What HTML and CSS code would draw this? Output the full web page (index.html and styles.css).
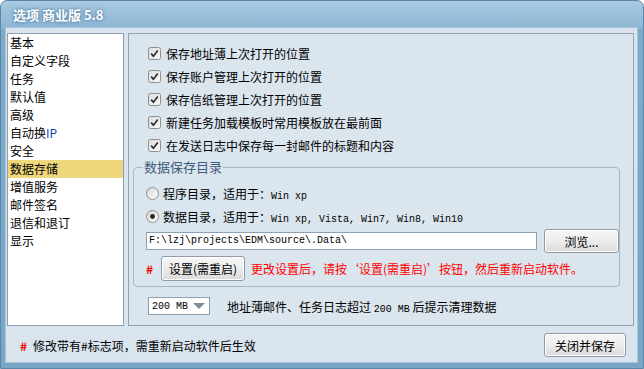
FILE: index.html
```html
<!DOCTYPE html>
<html lang="zh-CN">
<head>
<meta charset="utf-8">
<title>选项 商业版 5.8</title>
<link rel="stylesheet" href="styles.css">
</head>
<body>
<div class="window">
  <div class="titlebar">选项 商业版 5.8</div>
  <div class="client">
    <div class="main">
      <ul class="nav">
        <li>基本</li>
        <li>自定义字段</li>
        <li>任务</li>
        <li>默认值</li>
        <li>高级</li>
        <li>自动换<span class="ip">IP</span></li>
        <li>安全</li>
        <li class="active">数据存储</li>
        <li>增值服务</li>
        <li>邮件签名</li>
        <li>退信和退订</li>
        <li>显示</li>
      </ul>
      <div class="panel">
        <div class="checks">
          <div class="check"><svg class="cb" viewBox="0 0 13 13"><defs><linearGradient id="g1" x1="0" y1="0" x2="1" y2="1"><stop offset="0" stop-color="#dcdcdc"/><stop offset="1" stop-color="#fbfbfb"/></linearGradient></defs><rect x="0.5" y="0.5" width="12" height="12" rx="2" fill="url(#g1)" stroke="#8e8f8f"/><path d="M3.2 6.6 L5.4 9.2 L9.8 3.4" fill="none" stroke="#2d2d2d" stroke-width="1.7"/></svg><span>保存地址薄上次打开的位置</span></div>
          <div class="check"><svg class="cb" viewBox="0 0 13 13"><rect x="0.5" y="0.5" width="12" height="12" rx="2" fill="url(#g1)" stroke="#8e8f8f"/><path d="M3.2 6.6 L5.4 9.2 L9.8 3.4" fill="none" stroke="#2d2d2d" stroke-width="1.7"/></svg><span>保存账户管理上次打开的位置</span></div>
          <div class="check"><svg class="cb" viewBox="0 0 13 13"><rect x="0.5" y="0.5" width="12" height="12" rx="2" fill="url(#g1)" stroke="#8e8f8f"/><path d="M3.2 6.6 L5.4 9.2 L9.8 3.4" fill="none" stroke="#2d2d2d" stroke-width="1.7"/></svg><span>保存信纸管理上次打开的位置</span></div>
          <div class="check"><svg class="cb" viewBox="0 0 13 13"><rect x="0.5" y="0.5" width="12" height="12" rx="2" fill="url(#g1)" stroke="#8e8f8f"/><path d="M3.2 6.6 L5.4 9.2 L9.8 3.4" fill="none" stroke="#2d2d2d" stroke-width="1.7"/></svg><span>新建任务加载模板时常用模板放在最前面</span></div>
          <div class="check"><svg class="cb" viewBox="0 0 13 13"><rect x="0.5" y="0.5" width="12" height="12" rx="2" fill="url(#g1)" stroke="#8e8f8f"/><path d="M3.2 6.6 L5.4 9.2 L9.8 3.4" fill="none" stroke="#2d2d2d" stroke-width="1.7"/></svg><span>在发送日志中保存每一封邮件的标题和内容</span></div>
        </div>
        <fieldset class="group">
          <legend>数据保存目录</legend>
          <div class="radio"><svg class="rb" viewBox="0 0 13 13"><defs><linearGradient id="g2" x1="0" y1="0" x2="1" y2="1"><stop offset="0" stop-color="#d6d6d6"/><stop offset="1" stop-color="#fdfdfd"/></linearGradient></defs><circle cx="6.5" cy="6.5" r="6" fill="url(#g2)" stroke="#8e8f8f"/></svg><span>程序目录，适用于：<span class="mono">Win xp</span></span></div>
          <div class="radio"><svg class="rb" viewBox="0 0 13 13"><circle cx="6.5" cy="6.5" r="6" fill="url(#g2)" stroke="#8e8f8f"/><circle cx="6.5" cy="6.5" r="2.4" fill="#222"/></svg><span>数据目录，适用于：<span class="mono">Win xp, Vista, Win7, Win8, Win10</span></span></div>
          <div class="path-row">
            <div class="input mono">F:\lzj\projects\EDM\source\.Data\</div>
            <button class="btn browse">浏览...</button>
          </div>
          <div class="set-row">
            <span class="hash">#</span>
            <button class="btn set">设置(需重启)</button>
            <span class="warn">更改设置后，请按‘设置(需重启)’按钮，然后重新启动软件。</span>
          </div>
        </fieldset>
        <div class="size-row">
          <div class="select"><span class="mono">200 MB</span><span class="arrow"></span></div>
          <span>地址薄邮件、任务日志超过 <span class="mono">200 MB</span> 后提示清理数据</span>
        </div>
      </div>
    </div>
    <div class="footer">
      <div class="note"><span class="hash">#</span>修改带有#标志项，需重新启动软件后生效</div>
      <button class="btn save">关闭并保存</button>
    </div>
  </div>
</div>
</body>
</html>
```

FILE: styles.css
```css
html, body {
  margin: 0;
  padding: 0;
  background: #ffffff;
}
body {
  font-family: "Noto Sans CJK SC", "Liberation Sans", sans-serif;
  font-size: 12px;
  color: #000;
}
.window {
  width: 644px;
  height: 369px;
  box-sizing: border-box;
  border: 1px solid #5a86aa;
  border-radius: 7px 7px 0 0;
  background: linear-gradient(#a9cae0, #8cb7d4 27px, #7fabcb 28px, #7aa6c6);
  display: flex;
  flex-direction: column;
}
.titlebar {
  height: 27px;
  line-height: 27px;
  padding-left: 12px;
  color: #ffffff;
  font-weight: bold;
  font-size: 13px;
  text-shadow: 0 0 4px #4f7da3, 0 0 2px #5d88ac;
  flex: none;
}
.client {
  flex: 1;
  margin: 0 6px 6px 5px;
  background: #d9e4ee;
  display: flex;
  flex-direction: column;
  box-shadow: 0 0 0 1px #a7c4da;
}
.main {
  display: flex;
  gap: 4px;
  padding: 5px 5px 0 1px;
  height: 293px;
}
.nav {
  list-style: none;
  margin: 0;
  padding: 0;
  width: 115px;
  background: #fff;
  border: 1px solid #8d9fae;
  flex: none;
}
.nav li {
  height: 18px;
  line-height: 18px;
  padding-left: 2px;
  white-space: nowrap;
}
.nav li.active {
  background: #efd77b;
}
.ip {
  color: #1f3fbf;
}
.panel {
  flex: 1;
  border: 1px solid #8ea3b4;
  background: #dbe5ee;
  display: flex;
  flex-direction: column;
}
.checks {
  padding: 8px 0 0 19px;
}
.check {
  height: 23px;
  display: flex;
  align-items: center;
  gap: 5px;
}
.cb, .rb {
  width: 13px;
  height: 13px;
  flex: none;
}
.group {
  margin: 2px 13px 0 4px;
  padding: 7px 0 5px 12px;
  border: 1px solid #a3b8c9;
  border-radius: 4px;
}
.group legend {
  padding: 0 1px;
  margin-left: -3px;
  font-size: 13px;
  color: #3e5d7c;
  line-height: 16px;
}
.radio {
  height: 23px;
  display: flex;
  align-items: center;
  gap: 4px;
}
.mono {
  font-family: "Liberation Mono", "DejaVu Sans Mono", monospace;
  font-size: 10px;
}
.path-row {
  display: flex;
  align-items: center;
  gap: 7px;
  height: 24px;
  margin-top: 1px;
}
.input {
  width: 387px;
  height: 16px;
  line-height: 16px;
  border: 1px solid #8ea1b2;
  background: #fff;
  padding-left: 2px;
  box-sizing: content-box;
  font-size: 10px;
}
.btn {
  font-family: "Noto Sans CJK SC", "Liberation Sans", sans-serif;
  font-size: 12px;
  color: #000;
  border: 1px solid #8f9ba6;
  border-radius: 3px;
  background: linear-gradient(#f7f7f7, #ececec 50%, #dadada);
  padding: 0;
  box-shadow: inset 0 0 0 1px #ffffff;
}
.browse {
  width: 75px;
  height: 24px;
}
.set-row {
  display: flex;
  align-items: center;
  height: 25px;
  margin-top: 3px;
}
.hash {
  color: #f00000;
  font-weight: bold;
  width: 15px;
  flex: none;
}
.set {
  width: 84px;
  height: 25px;
  margin-left: 0;
}
.warn {
  color: #ff0000;
  margin-left: 6px;
  white-space: nowrap;
}
.size-row {
  display: flex;
  align-items: center;
  gap: 17px;
  margin: 10px 0 0 19px;
  height: 18px;
}
.select {
  height: 16px;
  border: 1px solid #8ea1b2;
  background: #fff;
  display: flex;
  align-items: center;
  justify-content: space-between;
  padding: 0 4px 0 3px;
  box-sizing: content-box;
  width: 53px;
}
.arrow {
  width: 0;
  height: 0;
  border-left: 6px solid transparent;
  border-right: 6px solid transparent;
  border-top: 6px solid #7f8c98;
}
.footer {
  flex: 1;
  display: flex;
  align-items: center;
  justify-content: space-between;
  padding: 2px 11px 0 14px;
}
.note {
  display: flex;
  align-items: center;
}
.note .hash {
  width: 13px;
}
.save {
  width: 82px;
  height: 24px;
}
```
